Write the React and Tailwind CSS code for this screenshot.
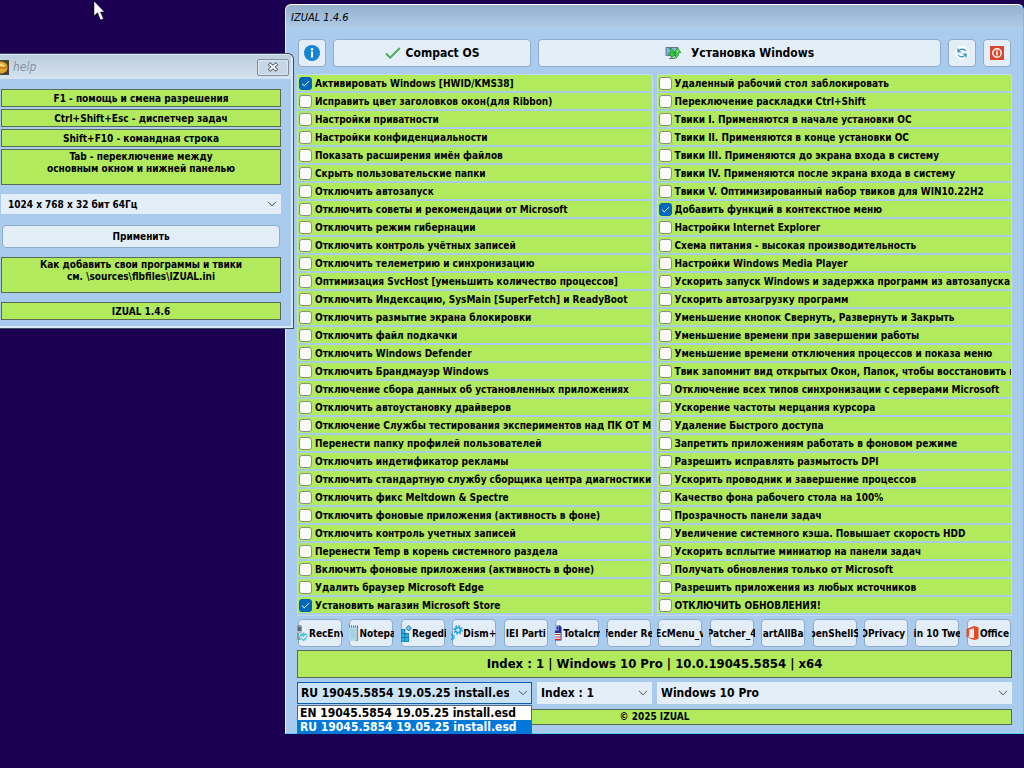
import React, { useState } from "react";

const LEFT = [
  ["Активировать Windows [HWID/KMS38]", true],
  ["Исправить цвет заголовков окон(для Ribbon)"],
  ["Настройки приватности"],
  ["Настройки конфиденциальности"],
  ["Показать расширения имён файлов"],
  ["Скрыть пользовательские папки"],
  ["Отключить автозапуск"],
  ["Отключить советы и рекомендации от Microsoft"],
  ["Отключить режим гибернации"],
  ["Отключить контроль учётных записей"],
  ["Отключить телеметрию и синхронизацию"],
  ["Оптимизация SvcHost [уменьшить количество процессов]"],
  ["Отключить Индексацию, SysMain [SuperFetch] и ReadyBoot"],
  ["Отключить размытие экрана блокировки"],
  ["Отключить файл подкачки"],
  ["Отключить Windows Defender"],
  ["Отключить Брандмауэр Windows"],
  ["Отключение сбора данных об установленных приложениях"],
  ["Отключить автоустановку драйверов"],
  ["Отключение Службы тестирования экспериментов над ПК ОТ M"],
  ["Перенести папку профилей пользователей"],
  ["Отключить индетификатор рекламы"],
  ["Отключить стандартную службу сборщика центра диагностики"],
  ["Отключить фикс Meltdown & Spectre"],
  ["Отключить фоновые приложения (активность в фоне)"],
  ["Отключить контроль учетных записей"],
  ["Перенести Temp в корень системного раздела"],
  ["Включить фоновые приложения (активность в фоне)"],
  ["Удалить браузер Microsoft Edge"],
  ["Установить магазин Microsoft Store", true],
];

const RIGHT = [
  ["Удаленный рабочий стол заблокировать"],
  ["Переключение раскладки Ctrl+Shift"],
  ["Твики I. Применяются в начале установки ОС"],
  ["Твики II. Применяются в конце установки ОС"],
  ["Твики III. Применяются до экрана входа в систему"],
  ["Твики IV. Применяются после экрана входа в систему"],
  ["Твики V. Оптимизированный набор твиков для WIN10.22H2"],
  ["Добавить функций в контекстное меню", true],
  ["Настройки Internet Explorer"],
  ["Схема питания - высокая производительность"],
  ["Настройки Windows Media Player"],
  ["Ускорить запуск Windows и задержка программ из автозапуска"],
  ["Ускорить автозагрузку программ"],
  ["Уменьшение кнопок Свернуть, Развернуть и Закрыть"],
  ["Уменьшение времени при завершении работы"],
  ["Уменьшение времени отключения процессов и показа меню"],
  ["Твик запомнит вид открытых Окон, Папок, чтобы восстановить и"],
  ["Отключение всех типов синхронизации с серверами Microsoft"],
  ["Ускорение частоты мерцания курсора"],
  ["Удаление Быстрого доступа"],
  ["Запретить приложениям работать в фоновом режиме"],
  ["Разрешить исправлять размытость DPI"],
  ["Ускорить проводник и завершение процессов"],
  ["Качество фона рабочего стола на 100%"],
  ["Прозрачность панели задач"],
  ["Увеличение системного кэша. Повышает скорость HDD"],
  ["Ускорить всплытие миниатюр на панели задач"],
  ["Получать обновления только от Microsoft"],
  ["Разрешить приложения из любых источников"],
  ["ОТКЛЮЧИТЬ ОБНОВЛЕНИЯ!"],
];

const RecEnvIcon = () => (
  <svg viewBox="0 0 12 18" className="h-[18px] w-[12px] shrink-0" aria-hidden="true">
    <path d="M0 1h4l1 2v13H0z" fill="#8d9a94" />
    <path d="M1 3h3v4H1z" fill="#5d6b66" />
    <path d="M0 8h5" stroke="#d4dcd8" />
    <path d="M2.500 9.500c2 0 3.200-1 4-1.500.8.5 2 1.500 4.500 1.500 0 4-1.500 6.500-4.500 8-2.800-1.500-4-4-4-8z" fill="#4fc3e8" stroke="#d8f5fc" strokeWidth=".8" />
    <path d="m4.500 12.500 2 2 2.800-3.500" fill="none" stroke="#fff" strokeWidth="1.300" />
  </svg>
);
const NotepadIcon = () => (
  <svg viewBox="0 0 11 18" className="h-[18px] w-[11px] shrink-0" aria-hidden="true">
    <path d="M1 3h8.500v13L8 17H1z" fill="#b4dce8" />
    <path d="M9.500 3v13L8 17" fill="none" stroke="#8a8f86" strokeWidth="1.200" />
    <path d="M2 6h6M2 8h6M2 10h6M2 12h6M2 14h6" stroke="#8fc3d3" strokeWidth=".7" />
    <path d="M1 2.500h9" stroke="#59676d" strokeWidth="2" strokeDasharray="1 1" />
  </svg>
);
const RegeditIcon = () => (
  <svg viewBox="0 0 12 17" className="h-[17px] w-[12px] shrink-0" aria-hidden="true">
    <path d="M1 4h8v13H1z" fill="#0c6f9f" />
    <path d="M1.500 4.500h3v3.500h-3zM1.500 8.700h3v3.600h-3zM5.300 8.700h3.200v3.600H5.300zM1.500 13h3v3.500h-3zM5.300 13h3.200v3.500H5.300z" fill="#2fb0e0" />
    <path d="M5.300 4h4v4h-4z" fill="#e4eef8" />
    <path d="m8.500.5 3 2.500-2.500 3L6 3.500z" fill="#66c5ea" stroke="#116f9e" strokeWidth=".8" />
  </svg>
);
const DismIcon = () => (
  <svg viewBox="0 0 12 16" className="h-[16px] w-[12px] shrink-0" aria-hidden="true">
    <circle cx="7" cy="5" r="2.500" fill="none" stroke="#1ea1e6" strokeWidth="1.600" />
    <circle cx="7" cy="5" r="4" fill="none" stroke="#1ea1e6" strokeWidth="1.600" strokeDasharray="1.600 1.540" />
    <circle cx="0" cy="12" r="2" fill="none" stroke="#1ea1e6" strokeWidth="1.700" />
    <circle cx="0" cy="12" r="3.300" fill="none" stroke="#1ea1e6" strokeWidth="1.300" strokeDasharray="1.300 1.290" />
  </svg>
);
const TotalIcon = () => (
  <svg viewBox="0 0 9 16" className="h-[16px] w-[9px] shrink-0" aria-hidden="true">
    <path d="M1 .5h5L7.500 2v13.500H1z" fill="#1c2f9c" />
    <path d="M1 .5h3.500v5H1z" fill="#aebbe8" />
    <path d="M2.500 1.500H4v3H2.500z" fill="#1c2f9c" />
    <path d="M1 8h5.500v7H1z" fill="#fff" />
    <path d="M1 9.500h5.500M1 12h5.500M1 14.400h5.500" stroke="#d92a2a" strokeWidth="1.200" />
  </svg>
);
const OfficeIcon = () => (
  <svg viewBox="0 0 14 14" className="h-[14px] w-[14px] shrink-0" aria-hidden="true">
    <path d="M.5 3 8 0l4.500 1.300v11.400L8 14 .5 11.200l7.500 1V2.200L3.100 3.400v6.800L.5 11.200z" fill="#e8481c" />
  </svg>
);

const TOOLS = [
  ["RecEnv", RecEnvIcon],
  ["Notepa", NotepadIcon],
  ["Regedi", RegeditIcon],
  ["Dism++", DismIcon],
  ["IEI Parti"],
  ["Totalcm", TotalIcon],
  ["fender Re"],
  ["EcMenu_v"],
  ["Patcher_4"],
  ["artAllBa"],
  ["penShellS"],
  ["OPrivacy ."],
  ["in 10 Twe"],
  ["Office", OfficeIcon],
];

const BUTTON = "flex items-center justify-center rounded border border-[#8facc9] bg-[#e4eef8] hover:bg-[#f0f6fc]";
const PANEL = "border border-[#566b52] bg-[#b1ea5c] text-center";
const LINE = "h-[18px] pt-px leading-[16px]";

function Check({ text, checked }) {
  const [on, setOn] = useState(Boolean(checked));
  return (
    <label className="flex h-[16px] items-center gap-[3px] bg-[#b1ea5c] pl-px whitespace-nowrap">
      <span className="grid shrink-0 place-items-center">
        <input
          type="checkbox"
          checked={on}
          onChange={() => setOn(!on)}
          className="col-start-1 row-start-1 size-[13px] appearance-none rounded-[3px] border border-[#84917c] bg-[#fbfbfb] checked:border-[#0061b8] checked:bg-[#0067c0]"
        />
        {on && (
          <svg viewBox="0 0 9 9" className="pointer-events-none col-start-1 row-start-1 size-[9px]" aria-hidden="true">
            <path d="m1 4.700 2.300 2.200L8 2.200" fill="none" stroke="#fff" strokeWidth="1" />
          </svg>
        )}
      </span>
      <span className="pt-[2px]">{text}</span>
    </label>
  );
}

function CheckList({ items, label }) {
  return (
    <fieldset aria-label={label} className="flex min-w-0 flex-col gap-[2px] overflow-hidden border border-[#c3d9ec] pb-[2px] text-[10px] leading-[14px]">
      {items.map(([text, checked]) => (
        <Check key={text} text={text} checked={checked} />
      ))}
    </fieldset>
  );
}

function Combo({ label, options, className, selectClass }) {
  return (
    <div className={`grid min-w-0 items-center ${className}`}>
      <select aria-label={label} className={`col-start-1 row-start-1 w-full min-w-0 appearance-none overflow-hidden ${selectClass}`}>
        {options.map((o) => (
          <option key={o}>{o}</option>
        ))}
      </select>
      <svg viewBox="0 0 10 6" className="pointer-events-none col-start-1 row-start-1 mr-[4px] h-[6px] w-[10px] justify-self-end" aria-hidden="true">
        <path d="m1 .8 4 4 4-4" fill="none" stroke="#4a5560" strokeWidth="1" />
      </svg>
    </div>
  );
}

function MainWindow() {
  return (
    <section aria-label="IZUAL 1.4.6" className="absolute top-[4px] right-0 left-[285px] rounded-t-md border border-t-white border-r-[#4fd0f0] border-b-[#4fd0f0] border-l-[#e8f3fc] bg-[#a9cbed] pb-[8px]">
      <header className="flex h-[25px] items-center rounded-t-md bg-linear-to-b from-[#94b0cd] to-[#b0cdea] pt-px pl-[5px]">
        <h1 className="text-[11px] font-normal italic">IZUAL 1.4.6</h1>
      </header>
      <div className="pt-[9px] pr-[11px] pl-[11px]">
        <div className="flex h-[28px] gap-[7px] px-px text-[12px]">
          <button aria-label="Информация" className={`${BUTTON} w-[28px] shrink-0`}>
            <svg viewBox="0 0 16 16" className="size-[16px]" aria-hidden="true">
              <circle cx="8" cy="8" r="8" fill="#1584d4" />
              <circle cx="8" cy="4.300" r="1.200" fill="#fff" />
              <path d="M8 6.500v6" stroke="#fff" strokeWidth="2" />
            </svg>
          </button>
          <button className={`${BUTTON} min-w-0 flex-[198] gap-[5px]`}>
            <svg viewBox="0 0 16 12" className="h-[12px] w-[16px]" aria-hidden="true">
              <path d="m1 6.500 4.200 4.200L14.800 1" fill="none" stroke="#45ad4b" strokeWidth="1.800" />
            </svg>
            Compact OS
          </button>
          <button className={`${BUTTON} min-w-0 flex-[405] gap-[9px]`}>
            <svg viewBox="0 0 17 14" className="h-[14px] w-[17px]" aria-hidden="true">
              <path d="M1 1.500h12v8H1z" fill="#86b4d8" stroke="#59798f" />
              <path d="M4 12.500h5" stroke="#59798f" />
              <path d="M7.500 2 3.500 7H6c0 3 1.500 4.500 4 5-1.200-1.500-1.500-3-1.300-5H11z" fill="#34cf3c" stroke="#14822a" strokeWidth=".7" transform="rotate(180 7.200 7)" />
              <path d="m12.500 2-3.500 4.500h2c.2 3-.5 4.500-2 6 3-.5 4.500-2.500 4.700-6h2.300z" fill="#5be052" stroke="#14822a" strokeWidth=".7" />
            </svg>
            Установка Windows
          </button>
          <button aria-label="Обновить" className={`${BUTTON} w-[28px] shrink-0`}>
            <svg viewBox="0 0 14 14" className="size-[14px]" aria-hidden="true">
              <circle cx="7" cy="7" r="7" fill="#fafdff" />
              <path d="M3 2.500V6h3.500M3.300 5.500C5 2.600 9 2.400 10.800 5M11 11.500V8H7.500M10.700 8.500C9 11.400 5 11.600 3.200 9" fill="none" stroke="#258bd2" strokeWidth="1.200" />
            </svg>
          </button>
          <button aria-label="Выключить" className={`${BUTTON} w-[28px] shrink-0`}>
            <svg viewBox="0 0 14 14" className="size-[14px]" aria-hidden="true">
              <path d="M0 0h14v14H0z" fill="#d9482c" />
              <circle cx="7" cy="7" r="4.200" fill="none" stroke="#fff" strokeWidth="1.400" />
              <path d="M7 4.500v5" stroke="#fff" strokeWidth="1.500" />
            </svg>
          </button>
        </div>

        <div className="mt-[7px] grid grid-cols-2 gap-[4px]">
          <CheckList items={LEFT} label="Настройка системы" />
          <CheckList items={RIGHT} label="Твики" />
        </div>

        <nav aria-label="Программы" className="mt-[3px] flex justify-between px-px text-[10px]">
          {TOOLS.map(([name, Icon]) => (
            <button key={name} className={`${BUTTON} h-[28px] w-[44px]`}>
              <span className={`-mx-[2px] flex h-full min-w-0 flex-1 items-center overflow-hidden whitespace-nowrap ${Icon ? "justify-start" : "justify-center"}`}>
                {Icon && <Icon />}
                <span className="shrink-0">{name}</span>
              </span>
            </button>
          ))}
        </nav>

        <p className={`${PANEL} mt-[3px] h-[28px] text-[13px] leading-[26px]`}>Index : 1 | Windows 10 Pro | 10.0.19045.5854 | x64</p>

        <div className="mt-[4px] flex gap-[5px] text-[12px]">
          <div className="relative w-[235px] shrink-0">
            <Combo
              label="Образ"
              options={["RU 19045.5854 19.05.25 install.esd", "EN 19045.5854 19.05.25 install.esd"]}
              className=""
              selectClass="h-[22px] border border-[#0c5fb0] bg-[#cbe3f7] pr-[22px] pl-[3px]"
            />
            <ul role="listbox" aria-label="Образ" className="absolute top-full right-0 left-0 z-10 mt-px border border-b-0 border-[#52697f] bg-white leading-[14px]">
              <li role="option" aria-selected="false" className="px-[2px]">EN 19045.5854 19.05.25 install.esd</li>
              <li role="option" aria-selected="true" className="bg-[#0078d7] px-[2px] text-white">RU 19045.5854 19.05.25 install.esd</li>
            </ul>
          </div>
          <Combo label="Индекс" options={["Index : 1"]} className="w-[115px] shrink-0" selectClass="h-[22px] bg-[#e4eef8] pr-[18px] pl-[4px]" />
          <Combo label="Редакция" options={["Windows 10 Pro"]} className="flex-1" selectClass="h-[22px] bg-[#e4eef8] pr-[18px] pl-[4px]" />
        </div>

        <p className={`${PANEL} mt-[5px] h-[16px] text-[10px] leading-[14px]`}>© 2025 IZUAL</p>
      </div>
    </section>
  );
}

function HelpWindow() {
  return (
    <section aria-label="help" className="absolute top-[53px] left-0 z-20 w-[294px] rounded-tr-md border-t border-r border-b border-[#3c4e62] bg-[#a9cbed] text-[10px]">
      <div className="rounded-tr-md border-t border-r-2 border-b-2 border-[#dce9f5] pb-[6px]">
        <header className="flex h-[24px] items-center bg-linear-to-b from-[#bccddd] to-[#d6e3ef]">
          <svg viewBox="0 0 9 15" className="h-[15px] w-[9px]" aria-hidden="true">
            <path d="M0 0h9v15H0z" fill="#4a4438" />
            <path d="M0 1.500c5 0 7.500 2.500 7.500 6S5 13.500 0 13.500z" fill="#dfa52c" />
            <path d="M0 3.500c3 0 4.500 1 5 3H0z" fill="#f6d873" />
            <path d="M0 7.500c3 .8 5 .8 7.500-.5" fill="none" stroke="#9b4e16" strokeWidth=".8" />
          </svg>
          <h2 className="ml-[4px] flex-1 text-[12px] font-normal text-[#8494a4] italic">help</h2>
          <button aria-label="Закрыть" className="mr-[2px] flex h-[17px] w-[32px] items-center justify-center rounded-xs border border-[#7e8ea1] bg-[#c8d7e6] shadow-[inset_0_0_0_1px_#dce7f2]">
            <svg viewBox="0 0 12 10" className="h-[10px] w-[12px]" aria-hidden="true">
              <path d="m2 1.500 8 7m0-7-8 7" stroke="#3f4b5a" strokeWidth="3.600" />
              <path d="m2.500 2 7 6m0-6-7 6" stroke="#fff" strokeWidth="1.800" />
            </svg>
          </button>
        </header>
        <div className="flex flex-col pt-[10px] pr-[10px] pl-px">
          <div className="flex flex-col gap-[2px]">
            <p className={`${PANEL} ${LINE}`}>F1 - помощь и смена разрешения</p>
            <p className={`${PANEL} ${LINE}`}>Ctrl+Shift+Esc - диспетчер задач</p>
            <p className={`${PANEL} ${LINE}`}>Shift+F10 - командная строка</p>
            <p className={`${PANEL} h-[36px] pt-px leading-[12px]`}>Tab - переключение между<br />основным окном и нижней панелью</p>
          </div>
          <Combo label="Разрешение экрана" options={["1024 x 768 x 32 бит 64Гц"]} className="mt-[9px]" selectClass="h-[20px] bg-[#e4eef8] pr-[18px] pl-[7px]" />
          <button className={`${BUTTON} mx-px mt-[11px] h-[23px]`}>Применить</button>
          <p className={`${PANEL} mt-[9px] h-[36px] pt-px leading-[12px]`}>Как добавить свои программы и твики<br />см. \sources\flbfiles\IZUAL.ini</p>
          <p className={`${PANEL} mt-[9px] ${LINE}`}>IZUAL 1.4.6</p>
        </div>
      </div>
    </section>
  );
}

export default function App() {
  return (
    <main className="relative min-h-screen overflow-hidden bg-[#1b0052] font-['DejaVu_Sans_Condensed','DejaVu_Sans',sans-serif] font-bold text-black">
      <MainWindow />
      <HelpWindow />
      <svg viewBox="0 0 12 20" className="pointer-events-none absolute top-0 left-[93px] z-30 h-[20px] w-[12px]" aria-hidden="true">
        <path d="M1 1v15l3.500-3.300L7.500 20l3-1.200-3-6.800h4z" fill="#fff" stroke="#000" strokeWidth=".5" />
      </svg>
    </main>
  );
}
